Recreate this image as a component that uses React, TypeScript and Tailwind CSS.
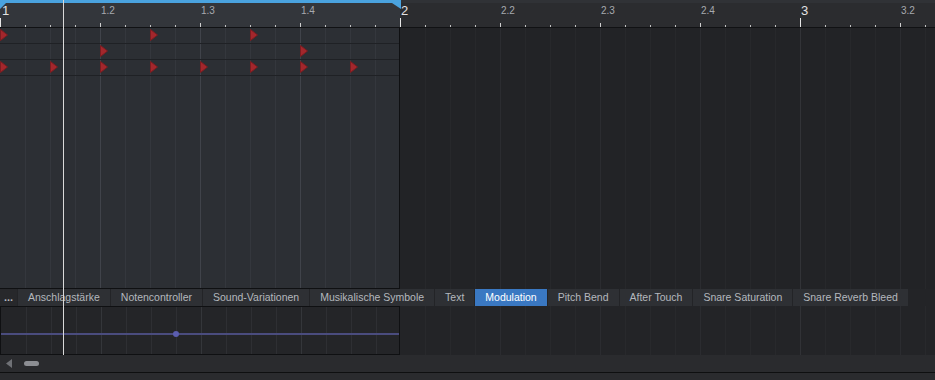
import React from "react";

const sixteenths = Array.from({ length: 38 }, (_, i) => i * 25);

const rulerLabels: { x: number; t: string; big?: boolean }[] = [
  { x: 2, t: "1", big: true },
  { x: 101, t: "1.2" },
  { x: 201, t: "1.3" },
  { x: 301, t: "1.4" },
  { x: 401, t: "2", big: true },
  { x: 501, t: "2.2" },
  { x: 601, t: "2.3" },
  { x: 701, t: "2.4" },
  { x: 801, t: "3", big: true },
  { x: 901, t: "3.2" },
];

const notes: { x: number; row: number }[] = [
  { x: 0, row: 0 },
  { x: 150, row: 0 },
  { x: 250, row: 0 },
  { x: 100, row: 1 },
  { x: 300, row: 1 },
  ...[0, 50, 100, 150, 200, 250, 300, 350].map((x) => ({ x, row: 2 })),
];

const tabs = [
  "Anschlagstärke",
  "Notencontroller",
  "Sound-Variationen",
  "Musikalische Symbole",
  "Text",
  "Modulation",
  "Pitch Bend",
  "After Touch",
  "Snare Saturation",
  "Snare Reverb Bleed",
];

function GridLines({ from, to, minor, beat, bar }: { from: number; to: number; minor: string; beat: string; bar: string }) {
  return (
    <>
      {sixteenths
        .filter((x) => x > from && x < to)
        .map((x) => {
          const rel = x - from;
          const color = x % 400 === 0 ? bar : x % 100 === 0 ? beat : minor;
          return (
            <div
              key={x}
              className="absolute top-0 bottom-0 w-px"
              style={{ left: rel, backgroundColor: color }}
            />
          );
        })}
    </>
  );
}

export default function App() {
  return (
    <div className="relative w-[935px] h-[380px] overflow-hidden bg-[#2b2c2f] flex flex-col font-['Liberation_Sans',Arial,sans-serif]">
      {/* Ruler */}
      <div className="relative h-[27px] flex shrink-0">
        <div className="w-[400px] bg-[#33363b]" />
        <div className="flex-1 bg-[#2b2c2f] border-t-[3px] border-[#303236]" />
        <svg className="absolute left-0 top-0" width="401" height="10" viewBox="0 0 401 10">
          <polygon points="0,0 401,0 401,9 392,3 6,3 0,9" fill="#4aa3df" />
        </svg>
        {rulerLabels.map((l) => (
          <span
            key={l.t}
            className={
              l.big
                ? "absolute top-[4px] text-[13px] leading-[13px] text-[#e2e2e2]"
                : "absolute top-[6px] text-[10px] leading-[10px] text-[#a6a9ae]"
            }
            style={{ left: l.x }}
          >
            {l.t}
          </span>
        ))}
        {sixteenths.map((x) => {
          const isBar = x % 400 === 0;
          const isBeat = x % 100 === 0;
          return (
            <div
              key={x}
              className={
                isBar
                  ? "absolute bottom-0 w-px h-[9px] bg-[#e6e6e6]"
                  : isBeat
                  ? "absolute bottom-0 w-px h-[4px] bg-[#d0d0d0]"
                  : "absolute bottom-0 w-px h-[2px] bg-[#c4c4c4]"
              }
              style={{ left: x }}
            />
          );
        })}
      </div>
      <div className="h-px bg-[#111214] shrink-0" />

      {/* Note area */}
      <div className="h-[261px] flex shrink-0">
        <div className="relative w-[400px] bg-[#2c2f34] border-r border-b border-[#0f1012]">
          <GridLines from={0} to={400} minor="#34373d" beat="#40434a" bar="#40434a" />
          {[15, 31, 47].map((y) => (
            <div key={y} className="absolute left-0 right-0 h-px bg-[#1f2125]" style={{ top: y }} />
          ))}
          {notes.map((n, i) => (
            <svg
              key={i}
              className="absolute"
              width="8"
              height="12"
              viewBox="0 0 8 12"
              style={{ left: n.x, top: 1 + n.row * 16 }}
            >
              <polygon points="0.5,0.5 7.5,6 0.5,11.5" fill="#a3272c" stroke="#7e1c20" strokeWidth="1" />
            </svg>
          ))}
        </div>
        <div className="relative flex-1 bg-[#222326]">
          <GridLines from={400} to={935} minor="#27282b" beat="#2b2c30" bar="#323337" />
        </div>
      </div>

      {/* Tab bar */}
      <div className="h-[17px] flex shrink-0 bg-[#232427]">
        <div className="w-[17px] shrink-0 flex items-center justify-center text-[11px] leading-none font-bold text-[#b4b8be] bg-[#27282b] pb-[1px]">
          ...
        </div>
        <div className="flex gap-px pl-px shrink-0">
          {tabs.map((t) => (
            <div
              key={t}
              className={
                t === "Modulation"
                  ? "shrink-0 whitespace-nowrap px-[10px] flex items-center text-[10.5px] leading-none text-white bg-[#3a78c2]"
                  : "shrink-0 whitespace-nowrap px-[10px] flex items-center text-[10.5px] leading-none text-[#b4b8be] bg-[#2e3034]"
              }
            >
              {t}
            </div>
          ))}
        </div>
      </div>

      {/* Controller lane */}
      <div className="h-[49px] flex shrink-0">
        <div className="relative w-[400px] bg-[#242528] border border-[#0f1012]">
          <GridLines from={0} to={400} minor="#2e2f33" beat="#34363a" bar="#34363a" />
          <div className="absolute left-0 right-0 top-[26px] h-[2px] bg-[#4a4c7e]" />
          <div className="absolute left-[172px] top-[24px] w-[6px] h-[6px] rounded-full bg-[#5b5db0]" />
        </div>
        <div className="relative flex-1 bg-[#232427]">
          <GridLines from={400} to={935} minor="#28292c" beat="#2b2c30" bar="#313236" />
        </div>
      </div>

      {/* Scrollbar */}
      <div className="h-[17px] flex items-center gap-[12px] pl-[6px] bg-[#2a2b2e] shrink-0">
        <svg width="6" height="9" viewBox="0 0 6 9">
          <polygon points="6,0 6,9 0,4.5" fill="#6f7176" />
        </svg>
        <div className="w-[15px] h-[5px] rounded-full bg-[#8c8e93]" />
      </div>
      <div className="h-px bg-[#0e0f10] shrink-0" />
      <div className="flex-1 bg-[#2a2b2e]" />

      {/* Playhead */}
      <div className="absolute left-[63px] top-0 h-[355px] w-px bg-[#d9d9d9]" />
    </div>
  );
}
